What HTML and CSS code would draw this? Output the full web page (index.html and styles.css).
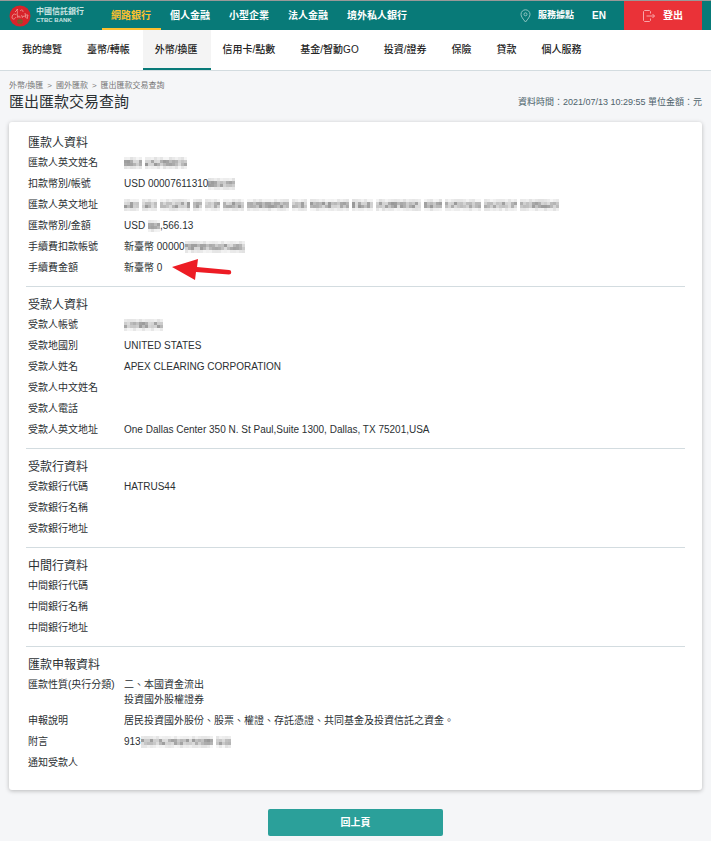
FILE: index.html
```html
<!DOCTYPE html>
<html lang="zh-Hant">
<head>
  <meta charset="UTF-8">
  <title>匯出匯款交易查詢</title>
  <meta name="viewport" content="width=device-width, initial-scale=1.0">
  <link rel="stylesheet" href="styles.css">
</head>
<body>

  <!-- Top bar -->
  <header class="topbar">
    <a class="logo" href="#">
      <svg class="logo-mark" viewBox="0 0 22 22" aria-hidden="true">
        <circle cx="11" cy="11" r="10.5" fill="#d8232a"/>
        <path d="M6 7l3-3M8 4c0 2 1 3 0 5M11 6c2-2 3-1 3 1M3 13c0-4 3-5 4-3M3 13c1 2 3 1 4-1M8 9l1 4M9 12c1-2 2-1 2 1M12 11c2-1 2 1 1 2M14 12c1-2 2-1 2 0M16 8l1 5M17 10h2l-1 4" fill="none" stroke="#f0a39e" stroke-width=".8"/>
        <path d="M9 15h4v3H9zM11 15v3" fill="none" stroke="#4c7a2c"/>
      </svg>
      <span class="logo-text">
        <span class="logo-zh">中國信託銀行</span>
        <span class="logo-en">CTBC BANK</span>
      </span>
    </a>
    <nav class="main-nav">
      <a class="active" href="#">網路銀行</a>
      <a href="#">個人金融</a>
      <a href="#">小型企業</a>
      <a href="#">法人金融</a>
      <a href="#">境外私人銀行</a>
    </nav>
    <div class="tools">
      <a class="branch" href="#">
        <svg width="11" height="14" viewBox="0 0 11 14" fill="none" stroke="#8fc4c1" aria-hidden="true">
          <path d="M5.500 13C3 10 1 7.500 1 5.300a4.500 4.500 0 0 1 9 0C10 7.500 8 10 5.500 13z"/>
          <circle cx="5.500" cy="5.300" r="1.500"/>
        </svg>
        服務據點
      </a>
      <a class="lang" href="#">EN</a>
      <button class="logout" type="button">
        <svg width="12" height="12" viewBox="0 0 12 12" fill="none" stroke="#f7a5a8" aria-hidden="true">
          <path d="M7.500 3.500v-2l-1-1h-5l-1 1v9l1 1h5l1-1v-2M3.500 6h8M9.500 4l2 2-2 2"/>
        </svg>
        登出
      </button>
    </div>
  </header>

  <!-- Sub menu -->
  <nav class="sub-nav">
    <a href="#">我的總覽</a>
    <a href="#">臺幣/轉帳</a>
    <a class="active" href="#">外幣/換匯</a>
    <a href="#">信用卡/點數</a>
    <a href="#">基金/智動GO</a>
    <a href="#">投資/證券</a>
    <a href="#">保險</a>
    <a href="#">貸款</a>
    <a href="#">個人服務</a>
  </nav>

  <main>
    <div class="breadcrumb">
      <a href="#">外幣/換匯</a><span>&gt;</span><a href="#">國外匯款</a><span>&gt;</span><a href="#">匯出匯款交易查詢</a>
    </div>
    <div class="page-head">
      <h1>匯出匯款交易查詢</h1>
      <p>資料時間：2021/07/13 10:29:55 單位金額：元</p>
    </div>

    <div class="card">
      <section>
        <h2>匯款人資料</h2>
        <dl>
          <dt>匯款人英文姓名</dt><dd><svg class="mask" data-words="6 14"></svg></dd>
          <dt>扣款幣別/帳號</dt><dd>USD 00007611310<svg class="mask" data-words="9"></svg></dd>
          <dt>匯款人英文地址</dt><dd><svg class="mask" data-words="5 5 10 3 5 7 14 5 13 7 15 6 12 11 13"></svg></dd>
          <dt>匯款幣別/金額</dt><dd>USD <svg class="mask" data-words="4"></svg>,566.13</dd>
          <dt>手續費扣款帳號</dt><dd>新臺幣 00000<svg class="mask" data-words="20"></svg></dd>
          <dt>手續費金額</dt>
          <dd>新臺幣 0
            <svg class="arrow" width="60" height="22" viewBox="0 0 60 22" aria-hidden="true">
              <path d="M0 9L26 1l-1 8 32 3a2 2 0 0 1 0 4.500l-33-2.500-1 8z" fill="#ed1c24"/>
            </svg>
          </dd>
        </dl>
      </section>

      <section>
        <h2>受款人資料</h2>
        <dl>
          <dt>受款人帳號</dt><dd><svg class="mask" data-words="13"></svg></dd>
          <dt>受款地國別</dt><dd>UNITED STATES</dd>
          <dt>受款人姓名</dt><dd>APEX CLEARING CORPORATION</dd>
          <dt>受款人中文姓名</dt><dd></dd>
          <dt>受款人電話</dt><dd></dd>
          <dt>受款人英文地址</dt><dd>One Dallas Center 350 N. St Paul,Suite 1300, Dallas, TX 75201,USA</dd>
        </dl>
      </section>

      <section>
        <h2>受款行資料</h2>
        <dl>
          <dt>受款銀行代碼</dt><dd>HATRUS44</dd>
          <dt>受款銀行名稱</dt><dd></dd>
          <dt>受款銀行地址</dt><dd></dd>
        </dl>
      </section>

      <section>
        <h2>中間行資料</h2>
        <dl>
          <dt>中間銀行代碼</dt><dd></dd>
          <dt>中間銀行名稱</dt><dd></dd>
          <dt>中間銀行地址</dt><dd></dd>
        </dl>
      </section>

      <section>
        <h2>匯款申報資料</h2>
        <dl>
          <dt>匯款性質(央行分類)</dt><dd>二、本國資金流出<br>投資國外股權證券</dd>
          <dt>申報說明</dt><dd>居民投資國外股份、股票、權證、存託憑證、共同基金及投資信託之資金。</dd>
          <dt>附言</dt><dd>913<svg class="mask" data-words="24 5"></svg></dd>
          <dt>通知受款人</dt><dd></dd>
        </dl>
      </section>
    </div>

    <button class="back" type="button">回上頁</button>
  </main>

  <script src="script.js"></script>
</body>
</html>
```

FILE: styles.css
```css
* {
  box-sizing: border-box;
}

body {
  margin: 0;
  background-color: #f5f6f8;
  color: #2b3033;
  font-family: "Liberation Sans", "Noto Sans CJK TC", sans-serif;
  font-size: 10px;
  line-height: 15px;
}

a {
  color: inherit;
  text-decoration: none;
}

button {
  border: 0;
  padding: 0;
  color: #fff;
  font: inherit;
  font-weight: bold;
  cursor: pointer;
}

/* Top bar */
.topbar {
  display: flex;
  height: 30px;
  padding: 0 9px;
  border-top: 1px solid #999;
  background-color: #087a78;
  color: #fff;
  font-weight: bold;
}

.logo {
  display: flex;
  align-items: center;
  gap: 5px;
  width: 93px;
}

.logo-mark {
  width: 22px;
  height: 22px;
}

.logo-text {
  display: flex;
  flex-direction: column;
  color: #c9e3e1;
}

.logo-zh {
  font-size: 8px;
  line-height: 9px;
}

.logo-en {
  font-size: 6px;
  line-height: 8px;
}

.main-nav {
  display: flex;
}

.main-nav a {
  padding: 0 10px 0 9px;
  line-height: 29px;
}

.main-nav .active {
  border-bottom: 2px solid #fdc02f;
  color: #fdc02f;
}

.tools {
  display: flex;
  align-items: center;
  margin-left: auto;
}

.branch {
  display: flex;
  align-items: center;
  gap: 7px;
  font-size: 9px;
}

.lang {
  padding: 0 18px;
}

.logout {
  display: flex;
  align-items: center;
  justify-content: center;
  gap: 8px;
  width: 78px;
  height: 29px;
  background-color: #ea3238;
}

/* Sub menu */
.sub-nav {
  display: flex;
  height: 41px;
  padding: 0 10px;
  border-bottom: 1px solid #d3dce0;
  background-color: #fff;
  color: #222;
  font-weight: 500;
}

.sub-nav a {
  padding: 0 13px 0 12px;
  line-height: 40px;
}

.sub-nav .active {
  border-bottom: 2px solid #087a78;
  background-color: #f4f4f4;
}

main {
  padding: 9px 9px 5px;
}

.breadcrumb {
  display: flex;
  gap: 4px;
  color: #777;
  font-size: 8px;
  line-height: 11px;
}

.page-head {
  display: flex;
  align-items: center;
  justify-content: space-between;
  padding-bottom: 9px;
}

h1 {
  margin: 0;
  font-size: 15px;
  font-weight: normal;
  line-height: 22px;
}

.page-head p {
  margin: 0;
  color: #4d626b;
  font-size: 9px;
}

/* Details */
.card {
  padding: 3px 17px 9px;
  border-radius: 3px;
  background-color: #fff;
  box-shadow: 0 1px 4px rgba(0, 0, 0, 0.25);
}

section {
  padding: 9px 2px 8px;
  border-bottom: 1px solid #d3dce0;
}

section:last-child {
  border-bottom: 0;
}

h2 {
  margin: 0;
  font-size: 12px;
  font-weight: normal;
  line-height: 18px;
}

dl {
  display: grid;
  grid-template-columns: 96px 1fr;
  margin: 0;
}

dt, dd {
  min-height: 21px;
  margin: 0;
  padding: 3px 0;
}

dd {
  position: relative;
}

.mask {
  height: 12px;
  vertical-align: -3px;
}

.arrow {
  position: absolute;
  top: 1px;
  left: 48px;
}

.back {
  display: block;
  width: 175px;
  height: 27px;
  margin: 19px auto 0;
  border-radius: 2px;
  background-color: #2ba09a;
}
```

FILE: script.js
```js
// fill hidden values with grey blocks, one number per word
const CELL = 3;
const ROWS = [0.12, 0.42, 0.42, 0.12];
let seed = 7;

function noise() {
  seed = (seed * 1103 + 12345) % 65536;
  return seed / 65536;
}

document.querySelectorAll('.mask').forEach(svg => {
  let x = 0;
  svg.dataset.words.split(' ').forEach(count => {
    for (let i = 0; i < Number(count); i++) {
      ROWS.forEach((level, row) => {
        const rect = document.createElementNS('http://www.w3.org/2000/svg', 'rect');
        rect.setAttribute('x', x);
        rect.setAttribute('y', row * CELL);
        rect.setAttribute('width', CELL);
        rect.setAttribute('height', CELL);
        rect.setAttribute('fill', '#333');
        rect.setAttribute('fill-opacity', (level * (0.4 + noise() * 0.8)).toFixed(2));
        svg.appendChild(rect);
      });
      x += CELL;
    }
    x += CELL;
  });
  svg.setAttribute('width', x - CELL);
});
```
